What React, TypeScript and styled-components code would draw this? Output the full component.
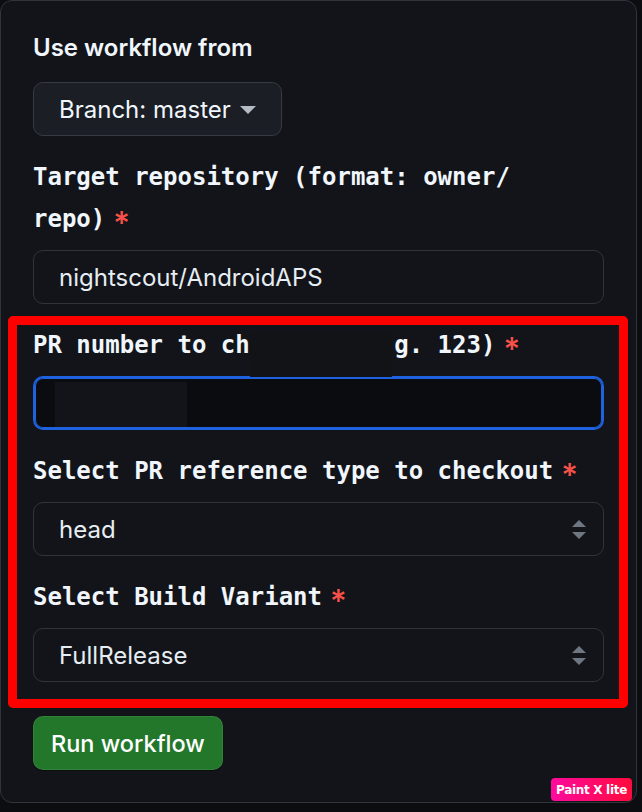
import React from "react"
import styled, { createGlobalStyle } from "styled-components"

const GlobalStyle = createGlobalStyle`
  html, body {
    margin: 0;
    padding: 0;
    background: #0b0d10;
  }
  * {
    box-sizing: border-box;
  }
`

const Page = styled.div`
  position: relative;
  width: 642px;
  height: 812px;
  overflow: hidden;
  background: #0b0d10;
`

const Panel = styled.div`
  width: 637px;
  display: flex;
  flex-direction: column;
  padding: 32px;
  background: #121419;
  border: 1px solid #30353c;
  border-radius: 12px;
`

const Heading = styled.div`
  font-family: Inter, "Noto Sans", sans-serif;
  font-weight: 600;
  font-size: 24px;
  line-height: 30px;
  color: #f0f6fc;
  margin-bottom: 19px;
`

const BranchButton = styled.div`
  align-self: flex-start;
  display: inline-flex;
  align-items: center;
  gap: 9px;
  height: 54px;
  padding: 0 25px;
  background: #1b1e25;
  border: 1px solid #363b43;
  border-radius: 10px;
  font-family: Inter, "Noto Sans", sans-serif;
  font-size: 24px;
  color: #f0f6fc;
`

const Caret = styled.span`
  width: 0;
  height: 0;
  margin-top: 2px;
  border-left: 8px solid transparent;
  border-right: 8px solid transparent;
  border-top: 8px solid #b4bbc3;
`

const Field = styled.div`
  margin-top: 20px;
`

const Label = styled.div`
  font-family: "DejaVu Sans Mono", "Liberation Mono", monospace;
  font-weight: bold;
  font-size: 24px;
  line-height: 42px;
  color: #f0f6fc;
  margin-bottom: 10px;
  padding-right: 8px;
`

const Required = styled.span`
  color: #f85149;
  font-family: Inter, "Noto Sans", sans-serif;
  font-weight: 500;
  font-size: 32px;
  line-height: 0;
  vertical-align: -8px;
  margin-left: 8px;
`

const Control = styled.div<{ $focused?: boolean }>`
  position: relative;
  display: flex;
  align-items: center;
  height: 54px;
  padding: 0 25px;
  border-radius: 10px;
  font-family: Inter, "Noto Sans", sans-serif;
  font-size: 24px;
  color: #e6edf3;
  background: ${p => (p.$focused ? "#0b0c0f" : "#121419")};
  border: ${p => (p.$focused ? "2px solid #1f62e0" : "1px solid #30353c")};
  box-shadow: ${p => (p.$focused ? "inset 0 0 0 1px #1f62e0" : "none")};
`

const Value = styled.span`
  flex: 1;
`

const Arrows = styled.span`
  display: flex;
  flex-direction: column;
  gap: 5px;
  margin-right: -8px;

  &::before,
  &::after {
    content: "";
    width: 0;
    height: 0;
    border-left: 7px solid transparent;
    border-right: 7px solid transparent;
  }
  &::before {
    border-bottom: 7px solid #6e7681;
  }
  &::after {
    border-top: 7px solid #6e7681;
  }
`

const RunButton = styled.div`
  align-self: flex-start;
  margin-top: 34px;
  display: inline-flex;
  align-items: center;
  height: 54px;
  padding: 0 17px;
  background: #22772b;
  border: 1px solid rgba(255, 255, 255, 0.08);
  border-radius: 10px;
  box-shadow: 0 1px 0 rgba(0, 0, 0, 0.3);
  font-family: Inter, "Noto Sans", sans-serif;
  font-weight: 500;
  font-size: 23.5px;
  color: #ffffff;
`

const Annotation = styled.div`
  position: absolute;
  left: 8px;
  top: 316px;
  width: 620px;
  height: 392px;
  border: 9px solid #ff0000;
  border-radius: 5px;
  pointer-events: none;
`

const Redaction = styled.div<{ $x: number; $y: number; $w: number; $h: number; $color: string }>`
  position: absolute;
  left: ${p => p.$x}px;
  top: ${p => p.$y}px;
  width: ${p => p.$w}px;
  height: ${p => p.$h}px;
  background: ${p => p.$color};
`

const Badge = styled.div`
  position: absolute;
  left: 551px;
  top: 778px;
  width: 81px;
  height: 23px;
  display: flex;
  align-items: center;
  justify-content: center;
  border-radius: 4px;
  background: linear-gradient(90deg, #ff0a9e, #ff0a3c);
  font-family: "DejaVu Sans", sans-serif;
  font-weight: bold;
  font-size: 12px;
  letter-spacing: -0.3px;
  color: #ffffff;
`

const SelectField = ({ label, value }: { label: string; value: string }) => (
  <Field>
    <Label>
      {label}
      <Required>*</Required>
    </Label>
    <Control>
      <Value>{value}</Value>
      <Arrows />
    </Control>
  </Field>
)

const App = () => (
  <Page>
    <GlobalStyle />
    <Panel>
      <Heading>Use workflow from</Heading>
      <BranchButton>
        Branch: master
        <Caret />
      </BranchButton>
      <Field>
        <Label>
          Target repository (format: owner/<wbr />repo)
          <Required>*</Required>
        </Label>
        <Control>
          <Value>nightscout/AndroidAPS</Value>
        </Control>
      </Field>
      <Field>
        <Label>
          PR number to checkout (e.g. 123)
          <Required>*</Required>
        </Label>
        <Control $focused />
      </Field>
      <SelectField label="Select PR reference type to checkout" value="head" />
      <SelectField label="Select Build Variant" value="FullRelease" />
      <RunButton>Run workflow</RunButton>
    </Panel>
    <Redaction $x={250} $y={333} $w={142} $h={44} $color="#111317" />
    <Redaction $x={55} $y={382} $w={132} $h={45} $color="#121419" />
    <Annotation />
    <Badge>Paint X lite</Badge>
  </Page>
)

export default App
